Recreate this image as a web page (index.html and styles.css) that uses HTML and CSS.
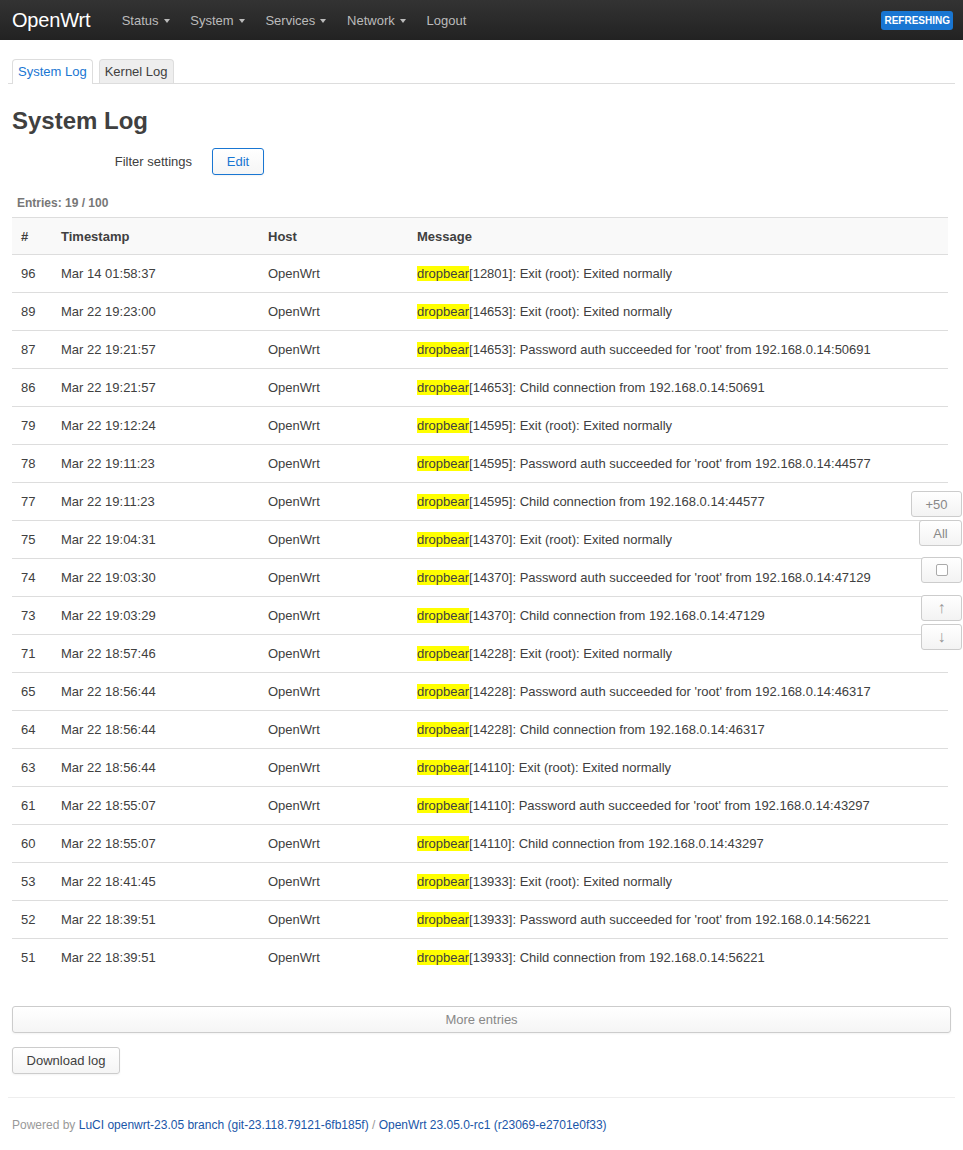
FILE: index.html
```html
<!DOCTYPE html>
<html>
<head>
<meta charset="utf-8">
<title>System Log - OpenWrt</title>
<link rel="stylesheet" href="styles.css">
</head>
<body>
<header class="navbar">
  <a class="brand">OpenWrt</a>
  <ul class="nav">
    <li><a>Status<span class="caret"></span></a></li>
    <li><a>System<span class="caret"></span></a></li>
    <li><a>Services<span class="caret"></span></a></li>
    <li><a>Network<span class="caret"></span></a></li>
    <li><a>Logout</a></li>
  </ul>
  <span class="badge">REFRESHING</span>
</header>

<main class="main">
  <ul class="tabs">
    <li class="tab active">System Log</li>
    <li class="tab">Kernel Log</li>
  </ul>

  <h2 class="title">System Log</h2>

  <div class="filter">
    <label class="filter-label">Filter settings</label>
    <button class="btn btn-edit">Edit</button>
  </div>

  <div class="entries">Entries: 19 / 100</div>

  <table class="log">
    <thead>
      <tr><th class="c-num">#</th><th class="c-ts">Timestamp</th><th class="c-host">Host</th><th>Message</th></tr>
    </thead>
    <tbody id="rows"></tbody>
  </table>

  <button class="btn btn-more">More entries</button>
  <div><button class="btn btn-dl">Download log</button></div>

  <footer class="footer">
    Powered by <a>LuCI openwrt-23.05 branch (git-23.118.79121-6fb185f)</a> / <a>OpenWrt 23.05.0-rc1 (r23069-e2701e0f33)</a>
  </footer>
</main>

<div class="float">
  <button class="fbtn f50">+50</button>
  <button class="fbtn fall">All</button>
  <button class="fbtn fchk"><span class="box"></span></button>
  <button class="fbtn fup">&#8593;</button>
  <button class="fbtn fdn">&#8595;</button>
</div>

<script src="script.js"></script>
</body>
</html>
```

FILE: script.js
```js
var data = [
["96","Mar 14 01:58:37","12801","Exit (root): Exited normally"],
["89","Mar 22 19:23:00","14653","Exit (root): Exited normally"],
["87","Mar 22 19:21:57","14653","Password auth succeeded for 'root' from 192.168.0.14:50691"],
["86","Mar 22 19:21:57","14653","Child connection from 192.168.0.14:50691"],
["79","Mar 22 19:12:24","14595","Exit (root): Exited normally"],
["78","Mar 22 19:11:23","14595","Password auth succeeded for 'root' from 192.168.0.14:44577"],
["77","Mar 22 19:11:23","14595","Child connection from 192.168.0.14:44577"],
["75","Mar 22 19:04:31","14370","Exit (root): Exited normally"],
["74","Mar 22 19:03:30","14370","Password auth succeeded for 'root' from 192.168.0.14:47129"],
["73","Mar 22 19:03:29","14370","Child connection from 192.168.0.14:47129"],
["71","Mar 22 18:57:46","14228","Exit (root): Exited normally"],
["65","Mar 22 18:56:44","14228","Password auth succeeded for 'root' from 192.168.0.14:46317"],
["64","Mar 22 18:56:44","14228","Child connection from 192.168.0.14:46317"],
["63","Mar 22 18:56:44","14110","Exit (root): Exited normally"],
["61","Mar 22 18:55:07","14110","Password auth succeeded for 'root' from 192.168.0.14:43297"],
["60","Mar 22 18:55:07","14110","Child connection from 192.168.0.14:43297"],
["53","Mar 22 18:41:45","13933","Exit (root): Exited normally"],
["52","Mar 22 18:39:51","13933","Password auth succeeded for 'root' from 192.168.0.14:56221"],
["51","Mar 22 18:39:51","13933","Child connection from 192.168.0.14:56221"]
];
var tb = document.getElementById("rows");
data.forEach(function (r) {
  var tr = document.createElement("tr");
  tr.innerHTML = '<td class="c-num">' + r[0] + '</td><td class="c-ts">' + r[1] +
    '</td><td class="c-host">OpenWrt</td><td><mark class="hl">dropbear</mark>[' + r[2] + ']: ' +
    r[3].replace(/'/g, "&#39;") + '</td>';
  tb.appendChild(tr);
});
```

FILE: styles.css
```css
* { box-sizing: border-box; }
html, body { margin: 0; padding: 0; background: #fff; }
body {
  font-family: "Liberation Sans", Arial, Helvetica, sans-serif;
  font-size: 13px;
  color: #404040;
}
a { text-decoration: none; }

.navbar {
  height: 40px;
  background: linear-gradient(to bottom, #333 0%, #222 100%);
  display: flex;
  align-items: center;
  padding: 0 11px 0 12px;
}
.brand {
  color: #fff;
  font-size: 20px;
  margin-right: 21px;
  letter-spacing: -0.2px;
}
.nav {
  list-style: none;
  margin: 0;
  padding: 0;
  display: flex;
}
.nav li a {
  display: flex;
  align-items: center;
  color: #bbb;
  font-size: 13px;
  padding: 0 10.4px;
}
.caret {
  display: inline-block;
  width: 0; height: 0;
  border-left: 3.5px solid transparent;
  border-right: 3.5px solid transparent;
  border-top: 4px solid #bbb;
  margin-left: 5px;
  margin-top: 1px;
}
.badge {
  margin-left: auto;
  background: #1976d2;
  color: #fff;
  font-size: 10px;
  font-weight: bold;
  padding: 4px 3px 3px;
  border-radius: 3px;
  line-height: 12px;
  margin-top: 1px;
  margin-right: -1px;
}

.main { padding: 0 12px; }

.tabs {
  list-style: none;
  margin: 19px -4px 0 -4px;
  padding: 0 0 0 4px;
  display: flex;
  gap: 6px;
  border-bottom: 1px solid #ddd;
}
.tab {
  height: 24px;
  line-height: 24px;
  padding: 0 5px;
  border: 1px solid #ddd;
  border-bottom: none;
  border-radius: 4px 4px 0 0;
  background: #eee;
  color: #404040;
  font-size: 13px;
  margin-bottom: -1px;
}
.tab.active {
  background: #fff;
  color: #1976d2;
  height: 25px;
}

.title {
  font-size: 24px;
  font-weight: bold;
  margin: 22px 0 13px;
  line-height: 29px;
  color: #404040;
}

.filter {
  display: flex;
  align-items: center;
  gap: 20px;
}
.filter-label {
  width: 180px;
  text-align: right;
  font-size: 13px;
}

.btn {
  font-family: inherit;
  font-size: 13px;
  color: #404040;
  background: linear-gradient(to bottom, #fff 0%, #f5f5f5 100%);
  border: 1px solid #ccc;
  border-radius: 3px;
  box-shadow: 0 1px 2px rgba(0,0,0,0.05);
  height: 27px;
  padding: 0 14px;
}
.btn-edit {
  border-color: #1976d2;
  color: #1976d2;
  width: 52px;
  padding: 0;
}

.entries {
  margin: 21px 0 0 5px;
  font-size: 12px;
  font-weight: bold;
  color: #777;
  line-height: 14px;
}

.log {
  width: 936px;
  border-collapse: collapse;
  margin-top: 7px;
}
.log th, .log td {
  text-align: left;
  padding: 0 9px;
  height: 38px;
}
.log thead th {
  background: #f9f9f9;
  font-weight: bold;
  border-top: 1px solid #ddd;
  border-bottom: 1px solid #ddd;
  height: 37px;
}
.log tbody td { border-bottom: 1px solid #ddd; }
.log tbody tr:last-child td { border-bottom: none; }
.c-num { width: 40px; }
.c-ts { width: 207px; }
.c-host { width: 149px; }
.hl { background: #ff0; color: #404040; padding: 0; }

.btn-more {
  display: block;
  width: 939px;
  margin-top: 29px;
  color: #888;
}
.btn-dl {
  margin-top: 14px;
  width: 108px;
  padding: 0;
}

.footer {
  margin: 23px -4px 0 -4px;
  border-top: 1px solid #eee;
  padding: 20px 4px 20px;
  font-size: 12px;
  color: #999;
}
.footer a { color: #1a56a8; }

.float {
  position: absolute;
  top: 491px;
  right: 1px;
  display: flex;
  flex-direction: column;
  align-items: flex-end;
}
.fbtn {
  font-family: "Liberation Sans", Arial, sans-serif;
  font-size: 13px;
  color: #888;
  background: linear-gradient(to bottom, #fff 0%, #f3f3f3 100%);
  border: 1px solid #ccc;
  border-radius: 3px;
  height: 26px;
  padding: 0;
  display: flex;
  align-items: center;
  justify-content: center;
}
.f50 { width: 51px; }
.fall { width: 43px; margin-top: 3px; }
.fchk { width: 41px; margin-top: 11px; }
.fup, .fdn { width: 41px; font-size: 16px; color: #999; }
.fup { margin-top: 12px; }
.fdn { margin-top: 3px; }
.box {
  width: 12px; height: 12px;
  border: 1px solid #aaa;
  border-radius: 2px;
  background: #fff;
}
```
